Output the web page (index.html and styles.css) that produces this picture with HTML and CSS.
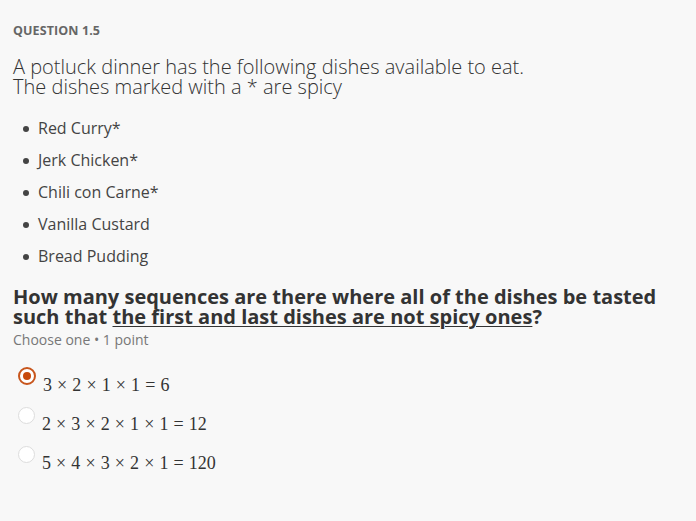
FILE: index.html
```html
<!DOCTYPE html>
<html>
<head>
<meta charset="utf-8">
<link rel="stylesheet" href="styles.css">
</head>
<body>
<div class="question">
  <div class="label">QUESTION 1.5</div>
  <div class="stem">A potluck dinner has the following dishes available to eat.<br>The dishes marked with a * are spicy</div>
  <ul class="dishes">
    <li>Red Curry*</li>
    <li>Jerk Chicken*</li>
    <li>Chili con Carne*</li>
    <li>Vanilla Custard</li>
    <li>Bread Pudding</li>
  </ul>
  <div class="prompt">How many sequences are there where all of the dishes be tasted such that <u>the first and last dishes are not spicy ones</u>?</div>
  <div class="meta">Choose one • 1 point</div>
  <div class="options">
    <div class="option"><span class="radio checked"></span><span class="math">3 × 2 × 1 × 1 = 6</span></div>
    <div class="option"><span class="radio"></span><span class="math">2 × 3 × 2 × 1 × 1 = 12</span></div>
    <div class="option"><span class="radio"></span><span class="math">5 × 4 × 3 × 2 × 1 = 120</span></div>
  </div>
</div>
</body>
</html>
```
FILE: styles.css
```css
html, body { margin: 0; padding: 0; background: #f8f8f8; }
body { font-family: "Open Sans", sans-serif; color: #333; }
.question { padding: 23px 13px 0 13px; }
.label { font-size: 12.5px; font-weight: 700; color: #666; line-height: 16px; letter-spacing: 0.1px; }
.stem { margin-top: 18px; font-size: 20px; font-weight: 300; line-height: 20px; color: #333; }
.dishes { margin: 15px 0 0 0; padding: 0 0 0 25px; list-style: none; }
.dishes li { font-size: 16px; line-height: 32px; color: #444; position: relative; }
.dishes li::before { content: ""; position: absolute; left: -15px; top: 14px; width: 6px; height: 6px; border-radius: 50%; background: #444; }
.prompt { margin-top: 15px; font-size: 20px; font-weight: 700; line-height: 20px; color: #333; }
.prompt u { text-decoration-thickness: 1px; text-underline-offset: 2px; }
.meta { margin-top: 3px; font-size: 14px; color: #777; line-height: 20px; }
.options { margin-top: 24px; display: flex; flex-direction: column; gap: 17px; padding-left: 5px; }
.option { display: flex; align-items: flex-start; gap: 7px; height: 22px; }
.radio { width: 15px; height: 15px; border-radius: 50%; border: 1px solid #ddd; background: #fff; flex: none; margin-top: -6px; }
.radio.checked { border: 2px solid #c8561d; width: 14px; height: 14px; background: #fff; position: relative; margin-top: -7px; }
.radio.checked::after { content: ""; position: absolute; left: 3px; top: 3px; width: 8px; height: 8px; border-radius: 50%; background: #c84a0c; }
.math { font-family: "Liberation Serif", serif; font-size: 18px; word-spacing: 0.6px; color: #333; line-height: 22px; }
```
